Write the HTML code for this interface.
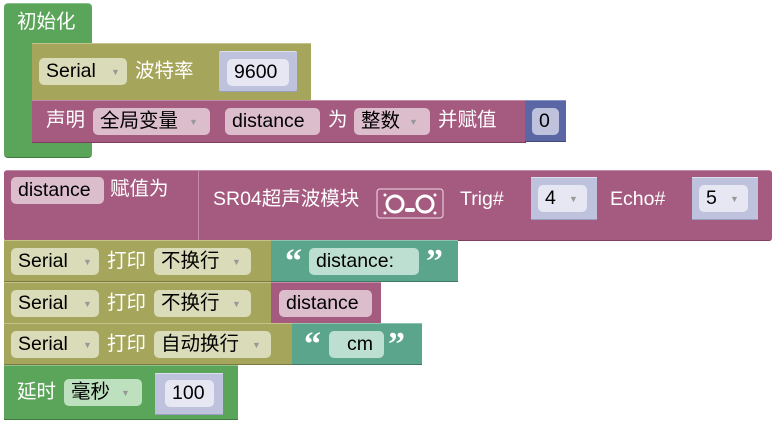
<!DOCTYPE html>
<html><head><meta charset="utf-8"><style>
body{margin:0;width:777px;height:428px;background:#fff;position:relative;overflow:hidden;font-family:"Liberation Sans","Noto Sans CJK SC",sans-serif;font-size:19.5px}
.b{position:absolute;box-sizing:border-box}
.g{background:#5ba55b;border-top:1px solid #8cc08c;border-bottom:1px solid #3f7a3f}
.o{background:#a5a55b;border-top:1px solid #c4c48a;border-bottom:1px solid #7a7a40}
.m{background:#a55b80;border-top:1px solid #c48aa6;border-bottom:1px solid #7a3f5e}
.t{background:#5ba58c;border-top:1px solid #8cc4b0;border-bottom:1px solid #3f7a66}
.l{background:#bec2dc;border-top:1px solid #dcdff0;border-bottom:1px solid #9a9ec0}
.d{background:#5b67a5;border-top:1px solid #8a94c4;border-bottom:1px solid #3f497a}
.f{position:absolute;border-radius:5px;color:#000;line-height:27px;height:27px;padding-left:7px;box-sizing:border-box;white-space:nowrap}
.fo{background:#dadbb9}.fm{background:#dcbdcc}.ft{background:#bddfd2}.fg{background:#bde0be}.fl{background:#e6e7f2}
.a{position:absolute;font-size:9px;color:#999;top:1px}
.w{position:absolute;color:#fff;line-height:27px;white-space:nowrap}
.q{position:absolute;color:#fff;font-family:"Liberation Serif",serif;font-weight:bold;font-size:34px;line-height:34px}
</style></head><body>
<div class="b g" style="left:4px;top:3px;width:88px;height:155px;border-radius:4px"></div>
<div class="w" style="left:17px;top:9px">初始化</div>
<div class="b o" style="left:32px;top:43px;width:279px;height:58px"></div>
<div class="f fo" style="left:39px;top:58px;width:88px">Serial<span class="a" style="left:72px">▼</span></div>
<div class="w" style="left:135px;top:58px">波特率</div>
<div class="b l" style="left:219px;top:51px;width:78px;height:41px;border-radius:2px"></div>
<div class="f fl" style="left:227px;top:59px;width:62px">9600</div>
<div class="b m" style="left:32px;top:100px;width:494px;height:43px"></div>
<div class="w" style="left:46px;top:107px">声明</div>
<div class="f fm" style="left:93px;top:108px;width:117px">全局变量<span class="a" style="left:96px">▼</span></div>
<div class="f fm" style="left:225px;top:108px;width:95px">distance</div>
<div class="w" style="left:328px;top:107px">为</div>
<div class="f fm" style="left:354px;top:108px;width:76px">整数<span class="a" style="left:55px">▼</span></div>
<div class="w" style="left:438px;top:107px">并赋值</div>
<div class="b d" style="left:525px;top:100px;width:41px;height:42px"></div>
<div class="f" style="left:532px;top:108px;width:27px;background:#bec2dc">0</div>
<div class="b m" style="left:4px;top:170px;width:768px;height:71px;border-radius:3px"></div>
<div class="b" style="left:198px;top:170px;width:1px;height:70px;background:#c48aa6"></div>
<div class="f fm" style="left:11px;top:177px;width:93px">distance</div>
<div class="w" style="left:110px;top:176px">赋值为</div>
<div class="w" style="left:213px;top:186px">SR04超声波模块</div>
<svg class="b" style="left:376px;top:188px" width="68" height="31" viewBox="0 0 68 31"><rect x="1" y="1" width="66" height="29" rx="3" fill="none" stroke="#e0c0d0" stroke-width="1.3"/><circle cx="19" cy="16" r="8" fill="none" stroke="#fff" stroke-width="3"/><circle cx="49" cy="16" r="8" fill="none" stroke="#fff" stroke-width="3"/><rect x="29" y="20" width="10" height="4" rx="2" fill="#fff"/><circle cx="9" cy="7" r="1.5" fill="#fff"/><circle cx="9" cy="25" r="1.5" fill="#fff"/><circle cx="59" cy="7" r="1.5" fill="#fff"/><circle cx="59" cy="25" r="1.5" fill="#fff"/></svg>
<div class="w" style="left:460px;top:186px">Trig#</div>
<div class="b l" style="left:531px;top:177px;width:66px;height:43px"></div>
<div class="f fl" style="left:538px;top:185px;width:49px">4<span class="a" style="left:31px">▼</span></div>
<div class="w" style="left:610px;top:186px">Echo#</div>
<div class="b l" style="left:692px;top:177px;width:66px;height:43px"></div>
<div class="f fl" style="left:699px;top:185px;width:49px">5<span class="a" style="left:31px">▼</span></div>
<div class="b o" style="left:4px;top:240px;width:268px;height:42px"></div>
<div class="f fo" style="left:11px;top:248px;width:88px">Serial<span class="a" style="left:72px">▼</span></div>
<div class="w" style="left:107px;top:248px">打印</div>
<div class="f fo" style="left:154px;top:248px;width:97px">不换行<span class="a" style="left:78px">▼</span></div>
<div class="b t" style="left:271px;top:240px;width:187px;height:42px"></div>
<div class="q" style="left:285px;top:245px">“</div>
<div class="f ft" style="left:309px;top:248px;width:110px">distance:</div>
<div class="q" style="left:426px;top:245px">”</div>
<div class="b o" style="left:4px;top:282px;width:268px;height:42px"></div>
<div class="f fo" style="left:11px;top:290px;width:88px">Serial<span class="a" style="left:72px">▼</span></div>
<div class="w" style="left:107px;top:290px">打印</div>
<div class="f fo" style="left:154px;top:290px;width:97px">不换行<span class="a" style="left:78px">▼</span></div>
<div class="b m" style="left:271px;top:282px;width:110px;height:42px"></div>
<div class="f fm" style="left:279px;top:290px;width:93px">distance</div>
<div class="b o" style="left:4px;top:323px;width:289px;height:42px"></div>
<div class="f fo" style="left:11px;top:331px;width:88px">Serial<span class="a" style="left:72px">▼</span></div>
<div class="w" style="left:107px;top:331px">打印</div>
<div class="f fo" style="left:154px;top:331px;width:117px">自动换行<span class="a" style="left:98px">▼</span></div>
<div class="b t" style="left:292px;top:323px;width:130px;height:42px"></div>
<div class="q" style="left:304px;top:328px">“</div>
<div class="f ft" style="left:329px;top:331px;width:55px;padding-left:18px">cm</div>
<div class="q" style="left:388px;top:328px">”</div>
<div class="b g" style="left:4px;top:365px;width:234px;height:55px"></div>
<div class="w" style="left:17px;top:379px">延时</div>
<div class="f fg" style="left:64px;top:379px;width:78px">毫秒<span class="a" style="left:57px">▼</span></div>
<div class="b l" style="left:155px;top:373px;width:68px;height:42px"></div>
<div class="f fl" style="left:165px;top:380px;width:49px">100</div>
</body></html>
